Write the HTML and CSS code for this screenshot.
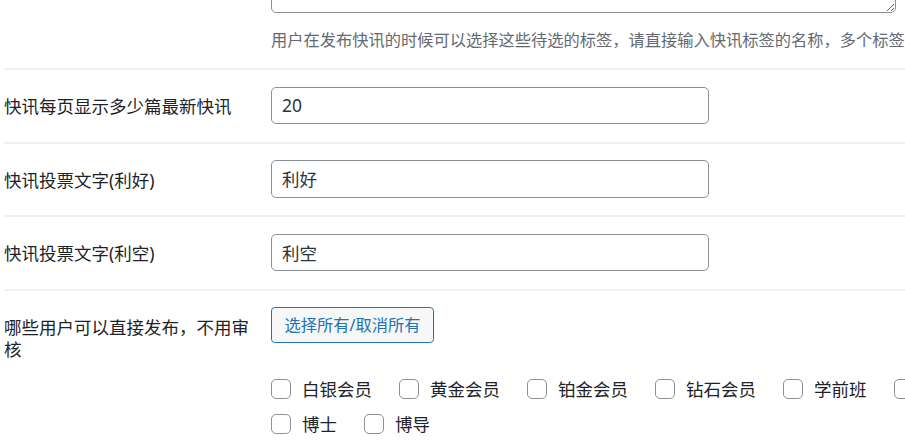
FILE: index.html
```html
<!DOCTYPE html>
<html lang="zh-CN">
<head>
<meta charset="utf-8">
<title>快讯设置</title>
<link rel="stylesheet" href="styles.css">
</head>
<body>
<div class="form">
  <div class="row row-first">
    <div class="th"></div>
    <div class="td">
      <textarea class="large-text" rows="3"></textarea>
      <p class="description">用户在发布快讯的时候可以选择这些待选的标签，请直接输入快讯标签的名称，多个标签之间用英文逗号隔开。</p>
    </div>
  </div>
  <div class="row">
    <label class="th" for="per-page">快讯每页显示多少篇最新快讯</label>
    <div class="td"><input id="per-page" class="regular-text" type="text" value="20"></div>
  </div>
  <div class="row">
    <label class="th" for="vote-up">快讯投票文字(利好)</label>
    <div class="td"><input id="vote-up" class="regular-text" type="text" value="利好"></div>
  </div>
  <div class="row">
    <label class="th" for="vote-down">快讯投票文字(利空)</label>
    <div class="td"><input id="vote-down" class="regular-text" type="text" value="利空"></div>
  </div>
  <div class="row row-last">
    <div class="th">哪些用户可以直接发布，不用审核</div>
    <div class="td">
      <button class="button" type="button">选择所有/取消所有</button>
      <div class="checks">
        <label class="check"><input type="checkbox"><span>白银会员</span></label>
        <label class="check"><input type="checkbox"><span>黄金会员</span></label>
        <label class="check"><input type="checkbox"><span>铂金会员</span></label>
        <label class="check"><input type="checkbox"><span>钻石会员</span></label>
        <label class="check"><input type="checkbox"><span>学前班</span></label>
        <label class="check"><input type="checkbox"><span>硕士</span></label>
        <label class="check"><input type="checkbox"><span>博士</span></label>
        <label class="check"><input type="checkbox"><span>博导</span></label>
      </div>
    </div>
  </div>
</div>
</body>
</html>
```
FILE: styles.css
```css
html, body {
  margin: 0;
  padding: 0;
  overflow: hidden;
  background: #ffffff;
}
body {
  font-family: "Noto Sans", "Noto Sans CJK SC", sans-serif;
  color: #1d2327;
  font-size: 17.5px;
}
.form {
  padding-left: 4px;
  width: 1200px;
}
.row {
  display: grid;
  grid-template-columns: 267px 1fr;
  border-bottom: 2px solid #f0f0f1;
}
.th {
  padding: 25px 12px 0 0;
  line-height: 22.75px;
  font-size: 17.5px;
  font-weight: 400;
  color: #1d2327;
}
.td {
  padding: 16.5px 0 17.5px;
  min-width: 0;
}
.row-first .td {
  padding: 0 0 16.5px;
}
.large-text {
  display: block;
  box-sizing: border-box;
  width: 625px;
  height: 60px;
  margin: -47.5px 0 0;
  border: 1px solid #8c8f94;
  border-radius: 5px;
  background: #fff;
  font-family: inherit;
  font-size: 17.5px;
}
.description {
  margin: 15px 0 0;
  font-size: 16.25px;
  line-height: 24px;
  color: #646970;
  white-space: nowrap;
}
.regular-text {
  display: block;
  box-sizing: border-box;
  width: 438px;
  height: 37.5px;
  margin: 0;
  padding: 0 10px;
  border: 1px solid #8c8f94;
  border-radius: 5px;
  background: #fff;
  color: #2c3338;
  font-family: inherit;
  font-size: 17.5px;
  outline: none;
}
.button {
  display: block;
  box-sizing: border-box;
  height: 36px;
  margin: 0;
  padding: 0 12.5px;
  border: 1px solid #2271b1;
  border-radius: 3.75px;
  background: #f6f7f7;
  color: #2271b1;
  font-family: inherit;
  font-size: 16.25px;
  line-height: 34px;
  cursor: pointer;
}
.checks {
  display: flex;
  flex-wrap: wrap;
  width: 740px;
  margin-top: 28px;
}
.check {
  display: inline-flex;
  align-items: center;
  height: 35px;
  margin-right: 27px;
  font-size: 17.5px;
  color: #1d2327;
}
.check input {
  appearance: none;
  -webkit-appearance: none;
  box-sizing: border-box;
  width: 20px;
  height: 20px;
  margin: 0 11px 0 0;
  border: 1px solid #8c8f94;
  border-radius: 5px;
  background: #fff;
}
.row-last {
  border-bottom: none;
}
```
